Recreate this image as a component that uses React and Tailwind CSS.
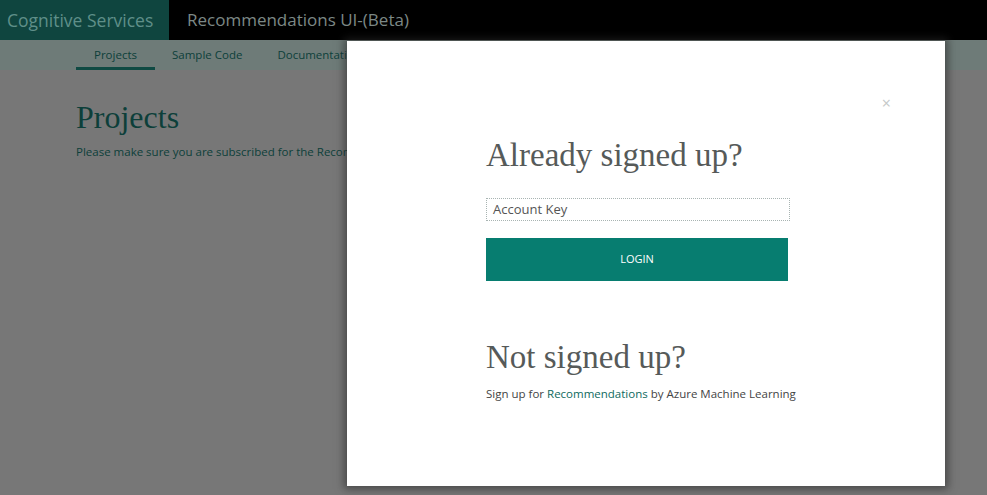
import React from 'react';

const sans = { fontFamily: '"Open Sans", "Noto Sans", sans-serif' };
const serif = { fontFamily: '"Liberation Serif", serif' };

export default function App() {
  return (
    <div className="relative w-[987px] h-[495px] overflow-hidden bg-[#777777]" style={sans}>
      {/* top bar */}
      <header className="flex h-[40px] bg-black">
        <div className="flex w-[169px] items-center bg-[#0f453f] pl-[7px] text-[17.5px] text-[#5f8f89]">
          Cognitive Services
        </div>
        <div className="flex items-center pl-[18px] text-[17px] text-[#7c8886]">
          Recommendations UI-(Beta)
        </div>
      </header>

      {/* sub nav */}
      <nav className="flex h-[30px] bg-[#6e7b78] pl-[76px] text-[11.5px] text-[#0d3f3a]">
        <div className="flex items-center border-b-[3px] border-[#0f4a43] px-[18px] pt-[3px]">Projects</div>
        <div className="flex items-center px-[17px]">Sample Code</div>
        <div className="flex items-center px-[18px]">Documentation</div>
      </nav>

      {/* page body */}
      <main className="pl-[76px] pt-[29px]">
        <h1 className="text-[32px] leading-[36px] text-[#0d3f3a]" style={serif}>Projects</h1>
        <p className="mt-[8px] text-[11.5px] text-[#0d3f3a]">
          Please make sure you are subscribed for the Recommendations API in the Azure Marketplace.
        </p>
      </main>

      {/* modal */}
      <div className="absolute left-[347px] top-[41px] h-[445px] w-[598px] bg-white pl-[139px] pt-[96px] shadow-[0_0_8px_3px_rgba(40,40,40,0.6)]">
        <button className="absolute right-[54px] top-[54px] text-[16px] leading-none text-[#c4c8c8]">×</button>
        <h2 className="text-[33px] leading-[36px] text-[#565a59]" style={serif}>Already signed up?</h2>
        <div className="mt-[25px] flex h-[23px] w-[304px] items-center border border-dotted border-[#a8b4b2] pl-[6px] text-[13px] text-[#555555]">
          Account Key
        </div>
        <button className="mt-[17px] flex h-[43px] w-[302px] items-center justify-center bg-[#077d70] text-[11px] text-white">
          LOGIN
        </button>
        <h2 className="mt-[58px] text-[33px] leading-[36px] text-[#565a59]" style={serif}>Not signed up?</h2>
        <p className="mt-[11px] text-[11.5px] leading-[16px] text-[#444444]">
          Sign up for <span className="text-[#0e6a60]">Recommendations</span> by Azure Machine Learning
        </p>
      </div>
    </div>
  );
}
